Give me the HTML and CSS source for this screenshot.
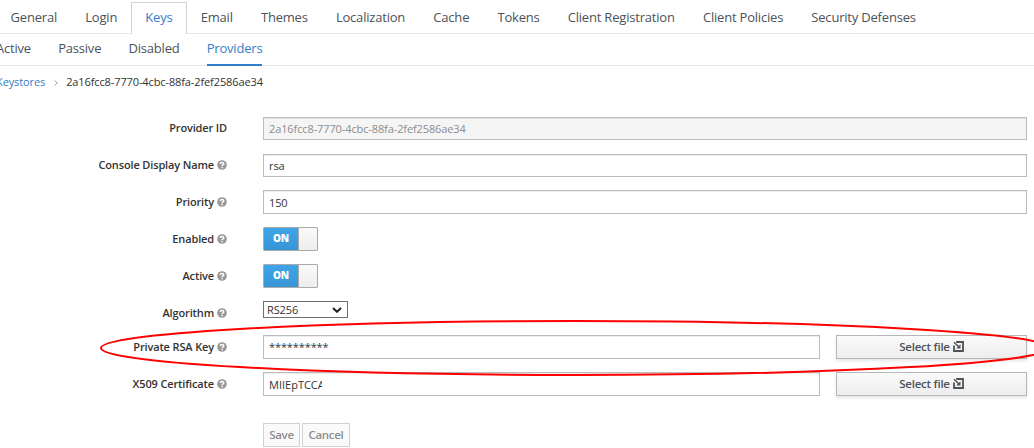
FILE: index.html
```html
<!DOCTYPE html>
<html lang="en">
<head>
<meta charset="utf-8">
<title>Keystore provider</title>
<link rel="stylesheet" href="styles.css">
</head>
<body>
<svg class="defs" width="0" height="0">
  <symbol id="help" viewBox="0 0 10 10"><circle cx="5" cy="5" r="4.8" fill="#999"/><path d="M3.2 3.9C3.3 2 6.8 2 6.8 3.9C6.8 5 5.1 4.9 5.1 6.2M5.1 7V8.2" fill="none" stroke="#fff" stroke-width="1.4"/></symbol>
  <symbol id="import" viewBox="0 0 11 11"><path d="M3.2 1H10V10H1V4.5" fill="none" stroke="#4d5258" stroke-width="1.8"/><path d="M1 1.2L6 6" stroke="#4d5258" stroke-width="1.5"/><path d="M7.5 3.2V7.5H3.2Z" fill="#4d5258"/></symbol>
</svg>
<nav class="tabs">
  <a class="tab">General</a><a class="tab">Login</a><a class="tab active">Keys</a><a class="tab">Email</a><a class="tab">Themes</a><a class="tab">Localization</a><a class="tab">Cache</a><a class="tab">Tokens</a><a class="tab">Client Registration</a><a class="tab">Client Policies</a><a class="tab">Security Defenses</a>
</nav>
<nav class="subtabs">
  <a class="subtab">Active</a><a class="subtab">Passive</a><a class="subtab">Disabled</a><a class="subtab active">Providers</a>
</nav>
<div class="crumbs"><a class="crumb-link">Keystores</a><svg class="chevron" viewBox="0 0 4 6"><path d="M.7 .5L3.2 3L.7 5.5" fill="none" stroke="#999"/></svg><span>2a16fcc8-7770-4cbc-88fa-2fef2586ae34</span></div>
<main class="form">
  <div class="row"><label class="label">Provider ID</label><div class="input disabled">2a16fcc8-7770-4cbc-88fa-2fef2586ae34</div></div>
  <div class="row short"><label class="label">Console Display Name<svg class="help"><use href="#help"/></svg></label><div class="input">rsa</div></div>
  <div class="row lower"><label class="label">Priority<svg class="help"><use href="#help"/></svg></label><div class="input tall">150</div></div>
  <div class="row lower"><label class="label">Enabled<svg class="help"><use href="#help"/></svg></label><div class="switch"><span class="on">ON</span></div></div>
  <div class="row lower"><label class="label">Active<svg class="help"><use href="#help"/></svg></label><div class="switch"><span class="on">ON</span></div></div>
  <div class="row lower select-row"><label class="label">Algorithm<svg class="help"><use href="#help"/></svg></label><div class="select"><span>RS256</span><svg class="arrow" viewBox="0 0 10 6"><path d="M1 1L5 4.8L9 1" fill="none" stroke="#222" stroke-width="2"/></svg></div></div>
  <div class="row lower"><label class="label">Private RSA Key<svg class="help"><use href="#help"/></svg></label><div class="input tall secret">**********</div><div class="file">Select file<svg class="import"><use href="#import"/></svg></div></div>
  <div class="row lower last"><label class="label">X509 Certificate<svg class="help"><use href="#help"/></svg></label><div class="input tall"><span class="cert">MIIEpTCCA</span></div><div class="file">Select file<svg class="import"><use href="#import"/></svg></div></div>
  <div class="actions"><div class="button save">Save</div><div class="button cancel">Cancel</div></div>
</main>
<svg class="highlight" viewBox="0 0 1034 448"><ellipse cx="575" cy="348" rx="474" ry="27" fill="none" stroke="#f00" stroke-width="2"/></svg>
</body>
</html>
```
FILE: styles.css
```css
* { box-sizing: border-box; }
body { margin: 0; width: 1034px; height: 448px; overflow: hidden; position: relative; background: #fff; color: #333; font: 11px/16px "Open Sans", sans-serif; letter-spacing: -.11px; }
.defs { position: absolute; }
.tabs { display: flex; height: 34px; padding: 2px 0 0; margin-left: -4px; border-bottom: 1px solid #e9e9e9; }
.tab { height: 32px; padding: 5px 13.6px 0; border: 1px solid transparent; border-bottom: 0; font-size: 13px; line-height: 18px; letter-spacing: -.2px; color: #4d5258; white-space: nowrap; margin-right: -1px; }
.tab.active { background: #fff; border-color: #d1d1d1; color: #337ecc; }
.subtabs { display: flex; gap: 27.2px; height: 32px; margin-left: -4px; border-bottom: 1px solid #e9e9e9; }
.subtab { height: 32px; padding-top: 5px; font-size: 13px; line-height: 18px; letter-spacing: -.2px; color: #4d5258; }
.subtab.active { color: #337ecc; border-bottom: 2px solid #337ecc; }
.crumbs { display: flex; align-items: center; height: 16px; margin: 8px 0 0 -4px; white-space: nowrap; }
.crumb-link { color: #337ecc; }
.chevron { width: 4px; height: 6px; margin: 1px 8px 0 9px; }
.form { padding-top: 27px; }
.row { display: flex; height: 37px; padding-right: 7px; }
.row.short { height: 36px; }
.row.select-row { height: 34px; }
.row.last { height: 51px; }
.label { display: flex; justify-content: flex-end; width: 227px; height: 22px; margin-right: 36px; line-height: 22px; font-weight: 600; letter-spacing: -.14px; white-space: nowrap; flex: none; }
.lower .label { margin-top: 1px; }
.help { width: 10px; height: 10px; margin: 6px 0 0 3px; flex: none; }
.input { flex: 1; height: 23px; padding: 0 5px; border: 1px solid #bbb; line-height: 22px; box-shadow: inset 0 1px 1px rgba(0,0,0,.075); white-space: nowrap; }
.input.tall { height: 24px; padding-top: 1px; }
.input.tall.secret { padding-top: 0; }
.input.disabled { background: #f5f5f5; color: #8b8d8f; }
.cert { display: block; width: 53px; overflow: hidden; letter-spacing: 0; }
.switch { width: 55px; height: 24px; border: 1px solid #aaa; border-radius: 1px; background: linear-gradient(#fafafa, #ededed); }
.on { display: block; width: 35px; height: 22px; border-right: 1px solid #aaa; background: linear-gradient(#3fa5e8, #3795d4); color: #fff; font-size: 10px; font-weight: 800; line-height: 21px; text-align: center; }
.select { display: flex; justify-content: space-between; align-items: center; width: 85px; height: 17px; padding: 0 5px 0 3px; border: 1px solid #707070; line-height: 15px; }
.arrow { width: 10px; height: 6px; }
.file { display: flex; justify-content: center; width: 191px; height: 24px; margin-left: 16px; border: 1px solid #b7b7b7; background: linear-gradient(#fafafa, #ededed); box-shadow: 0 2px 3px rgba(0,0,0,.1); color: #4d5258; font-weight: 600; font-size: 11.5px; line-height: 22px; letter-spacing: -.25px; }
.import { width: 11px; height: 11px; margin: 5px 0 0 3px; }
.actions { display: flex; gap: 2px; margin-left: 263px; }
.button { height: 24px; border: 1px solid #d1d1d1; background: #fafafa; color: #8b8d8f; font-weight: 600; font-size: 11.5px; line-height: 22px; letter-spacing: -.3px; text-align: center; }
.save { width: 37px; }
.cancel { width: 48px; }
.highlight { position: absolute; left: 0; top: 0; width: 1034px; height: 448px; pointer-events: none; }
```
